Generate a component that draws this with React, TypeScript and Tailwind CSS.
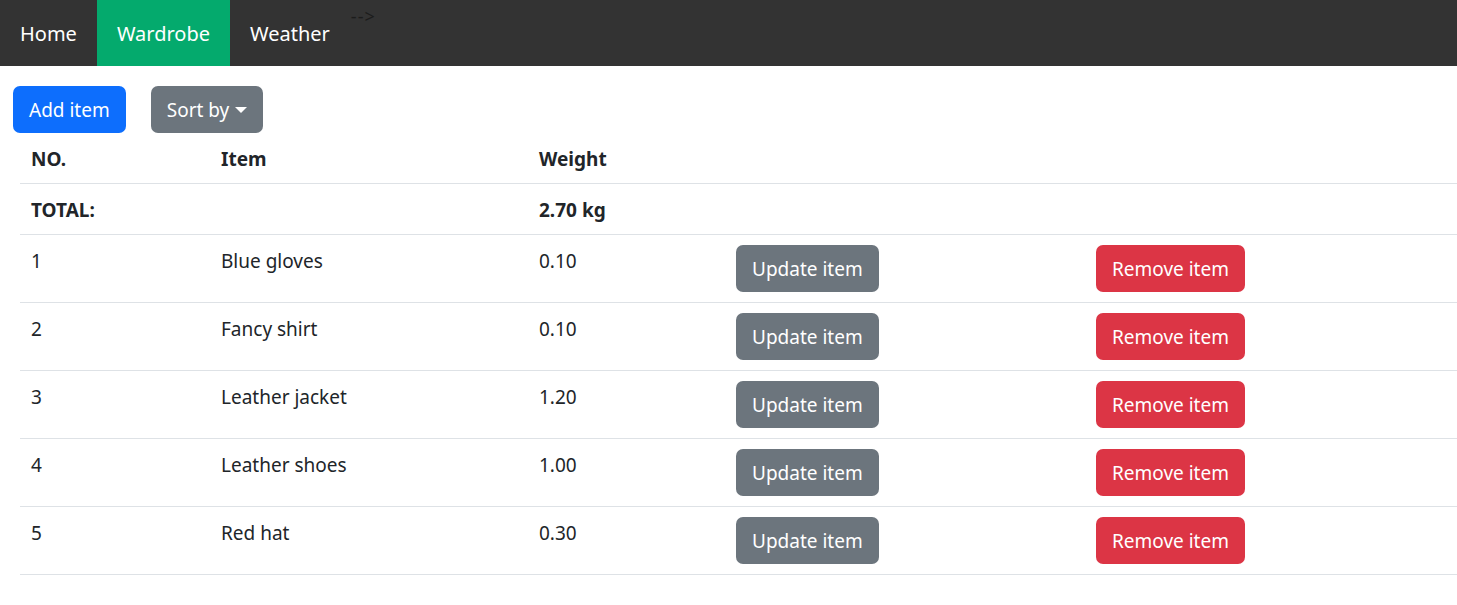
import React from 'react';

const items = [
  { no: 1, name: 'Blue gloves', weight: '0.10' },
  { no: 2, name: 'Fancy shirt', weight: '0.10' },
  { no: 3, name: 'Leather jacket', weight: '1.20' },
  { no: 4, name: 'Leather shoes', weight: '1.00' },
  { no: 5, name: 'Red hat', weight: '0.30' },
];

export default function App() {
  return (
    <div className="min-h-screen bg-white text-[#212529] text-[19px] leading-[30px]" style={{ fontFamily: '"Noto Sans", "Open Sans", sans-serif' }}>
      {/* top nav */}
      <nav className="flex h-[66px] bg-[#333333]">
        <a className="flex items-center pt-[2px] px-[20px] text-[20px] text-white">Home</a>
        <a className="flex items-center pt-[2px] px-[20px] text-[20px] bg-[#04aa6d] text-white">Wardrobe</a>
        <a className="flex items-center pt-[2px] px-[20px] text-[20px] text-white">Weather</a>
        <span className="self-start mt-[4px] ml-[1px] text-[18px] leading-[24px] tracking-[1px] text-[#1c1c1c]">--&gt;</span>
      </nav>

      <div className="flex gap-[25px] pl-[13px] pt-[20px]">
        <button className="h-[47px] px-[16px] rounded-[7px] bg-[#0d6efd] text-white">Add item</button>
        <button className="flex items-center h-[47px] px-[16px] rounded-[7px] bg-[#6c757d] text-white">
          Sort by
          <span className="ml-[6px] w-0 h-0 border-x-[6px] border-x-transparent border-t-[6px] border-t-white" />
        </button>
      </div>

      <table className="ml-[20px] w-[calc(100%-20px)] border-collapse table-fixed">
        <colgroup>
          <col className="w-[190px]" />
          <col className="w-[318px]" />
          <col className="w-[198px]" />
          <col className="w-[360px]" />
          <col />
        </colgroup>
        <thead>
          <tr className="border-b border-[#dee2e6] text-left font-bold">
            <th className="px-[11px] pt-[11px] pb-[9px] align-top">NO.</th>
            <th className="px-[11px] pt-[11px] pb-[9px] align-top">Item</th>
            <th className="px-[11px] pt-[11px] pb-[9px] align-top">Weight</th>
            <th />
            <th />
          </tr>
        </thead>
        <tbody>
          <tr className="border-b border-[#dee2e6] font-bold">
            <td className="px-[11px] pt-[11px] pb-[9px] align-top">TOTAL:</td>
            <td />
            <td className="px-[11px] pt-[11px] pb-[9px] align-top">2.70 kg</td>
            <td />
            <td />
          </tr>
          {items.map((it) => (
            <tr key={it.no} className="border-b border-[#dee2e6]">
              <td className="px-[11px] pt-[11px] pb-[9px] align-top">{it.no}</td>
              <td className="px-[11px] pt-[11px] pb-[9px] align-top">{it.name}</td>
              <td className="px-[11px] pt-[11px] pb-[9px] align-top">{it.weight}</td>
              <td className="px-[10px] py-[10px] align-top">
                <button className="h-[47px] px-[16px] rounded-[7px] bg-[#6c757d] text-white">Update item</button>
              </td>
              <td className="px-[10px] py-[10px] align-top">
                <button className="h-[47px] px-[16px] rounded-[7px] bg-[#dc3545] text-white">Remove item</button>
              </td>
            </tr>
          ))}
        </tbody>
      </table>
    </div>
  );
}
